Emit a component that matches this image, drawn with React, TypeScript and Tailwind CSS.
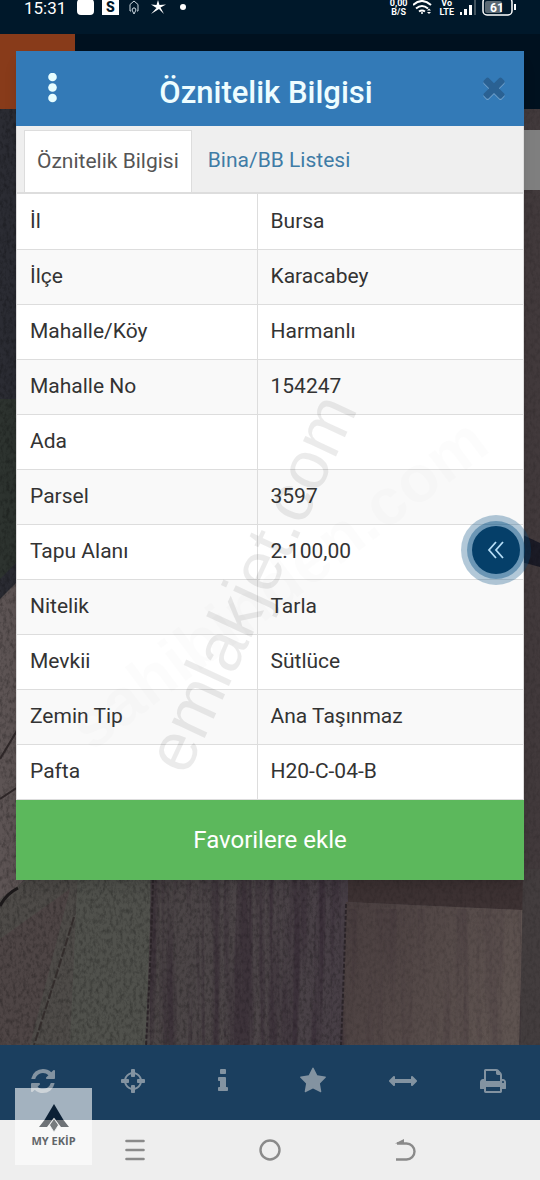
import { useState, type ReactNode } from "react";

interface AttributeRow {
  label: string;
  value: string;
}

const ROWS: AttributeRow[] = [
  { label: "İl", value: "Bursa" },
  { label: "İlçe", value: "Karacabey" },
  { label: "Mahalle/Köy", value: "Harmanlı" },
  { label: "Mahalle No", value: "154247" },
  { label: "Ada", value: "" },
  { label: "Parsel", value: "3597" },
  { label: "Tapu Alanı", value: "2.100,00" },
  { label: "Nitelik", value: "Tarla" },
  { label: "Mevkii", value: "Sütlüce" },
  { label: "Zemin Tip", value: "Ana Taşınmaz" },
  { label: "Pafta", value: "H20-C-04-B" },
];

// Toolbar glyphs, all on a 1792 unit square
const TOOLS = [
  {
    name: "Yenile",
    d: "M1639 1056q0 5-1 7-64 268-268 434.5t-478 166.5q-146 0-282.5-55t-243.5-157l-129 129q-19 19-45 19t-45-19-19-45v-448q0-26 19-45t45-19h448q26 0 45 19t19 45-19 45l-137 137q71 66 161 102t187 36q134 0 250-65t186-179q11-17 53-117 8-23 30-23h192q13 0 22.5 9.5t9.5 22.5zm25-800v448q0 26-19 45t-45 19h-448q-26 0-45-19t-19-45 19-45l138-138q-148-137-349-137-134 0-250 65t-186 179q-11 17-53 117-8 23-30 23h-199q-13 0-22.5-9.5t-9.5-22.5v-7q65-268 270-434.5t480-166.5q146 0 284 55.5t245 156.5l130-129q19-19 45-19t45 19 19 45z",
  },
  {
    name: "Konum",
    d: "M1325 1024h-109q-26 0-45-19t-19-45v-128q0-26 19-45t45-19h109q-32-108-112.5-188.5t-188.5-112.5v109q0 26-19 45t-45 19h-128q-26 0-45-19t-19-45v-109q-108 32-188.5 112.5t-112.5 188.5h109q26 0 45 19t19 45v128q0 26-19 45t-45 19h-109q32 108 112.5 188.5t188.5 112.5v-109q0-26 19-45t45-19h128q26 0 45 19t19 45v109q108-32 188.5-112.5t112.5-188.5zm339-192v128q0 26-19 45t-45 19h-143q-37 161-154.5 278.5t-278.5 154.5v143q0 26-19 45t-45 19h-128q-26 0-45-19t-19-45v-143q-161-37-278.5-154.5t-154.5-278.5h-143q-26 0-45-19t-19-45v-128q0-26 19-45t45-19h143q37-161 154.5-278.5t278.5-154.5v-143q0-26 19-45t45-19h128q26 0 45 19t19 45v143q161 37 278.5 154.5t154.5 278.5h143q26 0 45 19t19 45z",
  },
  {
    name: "Bilgi",
    d: "M1216 1344v128q0 26-19 45t-45 19h-512q-26 0-45-19t-19-45v-128q0-26 19-45t45-19h64v-384h-64q-26 0-45-19t-19-45v-128q0-26 19-45t45-19h384q26 0 45 19t19 45v576h64q26 0 45 19t19 45zm-128-1152v192q0 26-19 45t-45 19h-256q-26 0-45-19t-19-45v-192q0-26 19-45t45-19h256q26 0 45 19t19 45z",
  },
  {
    name: "Favoriler",
    d: "M1728 647q0 22-26 48l-363 354 86 500q1 7 1 20 0 21-10.5 35.5t-30.5 14.5q-19 0-40-12l-449-236-449 236q-22 12-40 12-21 0-31.5-14.5t-10.5-35.5q0-6 2-20l86-500-364-354q-25-27-25-48 0-37 56-46l502-73 225-455q19-41 49-41t49 41l225 455 502 73q56 9 56 46z",
  },
  {
    name: "Ölçüm",
    d: "M1792 896q0 26-19 45l-256 256q-19 19-45 19t-45-19-19-45v-128h-1024v128q0 26-19 45t-45 19-45-19l-256-256q-19-19-19-45t19-45l256-256q19-19 45-19t45 19 19 45v128h1024v-128q0-26 19-45t45-19 45 19l256 256q19 19 19 45z",
  },
  {
    name: "Yazdır",
    d: "M448 1536h896v-256h-896v256zm0-640h896v-384h-160q-40 0-68-28t-28-68v-160h-640v640zm1152 64q0-26-19-45t-45-19-45 19-19 45 19 45 45 19 45-19 19-45zm128 0v416q0 13-9.5 22.5t-22.5 9.5h-224v160q0 40-28 68t-68 28h-960q-40 0-68-28t-28-68v-160h-224q-13 0-22.5-9.5t-9.5-22.5v-416q0-79 56.5-135.5t135.5-56.5h64v-544q0-40 28-68t68-28h672q40 0 88 20t76 48l152 152q28 28 48 76t20 88v256h64q79 0 135.5 56.5t56.5 135.5z",
  },
];

const CLOSE_PATH =
  "M1490 1322q0 40-28 68l-136 136q-28 28-68 28t-68-28l-294-294-294 294q-28 28-68 28t-68-28l-136-136q-28-28-28-68t28-68l294-294-294-294q-28-28-28-68t28-68l136-136q28-28 68-28t68 28l294 294 294-294q28-28 68-28t68 28l136 136q28 28 28 68t-28 68l-294 294 294 294q28 28 28 68z";

function StatusBar() {
  return (
    <div className="flex h-[34px] items-start justify-between bg-[#00182a] px-6 text-white">
      <div className="flex h-4 items-center gap-2">
        <span className="text-[17px] leading-4">15:31</span>
        <svg className="h-4 w-[114px] shrink-0" viewBox="0 0 114 16" fill="none">
          <rect x="3" y="-1" width="17" height="16" rx="4" fill="#fff" />
          <rect x="28" y="-1" width="17" height="16" fill="#fff" />
          <text x="36.500" y="12" textAnchor="middle" fontSize="14" fontWeight="900" fill="#00182a">
            S
          </text>
          <path d="M57 11h-1V4.500L60 1l4 3.500V11h-1M60 14l-2-4 1-2h2l1 2z" stroke="#cdd8e0" />
          <path d="M77 4.500l5.500.5 1.500-5 1.500 5 6.500-.5-5.500 3 3.500 6.500-5-5-8 5 5.500-6z" fill="#fff" />
          <circle cx="109" cy="7" r="3" fill="#fff" />
        </svg>
      </div>
      <div className="flex h-4 items-center gap-[6px]">
        <span className="flex flex-col items-center text-[9px] leading-[9px] font-bold">
          <span>0,00</span>
          <span>B/S</span>
        </span>
        <svg className="h-4 w-5" viewBox="0 0 20 16" fill="none" stroke="#fff" strokeWidth="2">
          <path d="M0 5q9-8 18 0M3 8.500q6-5 12 0M6 11.500q3-2 6 0" />
          <circle cx="9" cy="13" r="1" fill="#fff" stroke="none" />
          <path d="M14 10.500l2-2 2 2zM14 12l2 2 2-2z" fill="#fff" stroke="none" />
        </svg>
        <span className="flex flex-col items-center text-[9px] leading-[9px] font-bold">
          <span>Vo</span>
          <span>LTE</span>
        </span>
        <svg className="h-4 w-4" viewBox="0 0 16 16">
          <path d="M0 12h2v3H0zM4 9h3v6H4zM9 5h3v10H9z" fill="#fff" />
          <path d="M14 0h2v15h-2z" fill="#43545f" />
        </svg>
        <svg className="h-4 w-[34px]" viewBox="0 0 34 16">
          <rect x="1" y="-2" width="29" height="17" rx="4" fill="none" stroke="#fff" strokeWidth="1.500" />
          <rect x="3" y="1" width="17" height="12" rx="2" fill="#5c6a74" />
          <path d="M32 4h2v6h-2z" fill="#fff" />
          <text x="15" y="11.500" textAnchor="middle" fontSize="12" fontWeight="700" fill="#fff">
            61
          </text>
        </svg>
      </div>
    </div>
  );
}

function SatelliteMap() {
  return (
    <svg className="absolute inset-0 h-full w-full" viewBox="0 0 540 936" preserveAspectRatio="xMidYMax slice">
      <defs>
        <filter id="soil" x="0" y="0" width="100%" height="100%">
          <feTurbulence type="fractalNoise" baseFrequency="0.3 0.2" numOctaves="4" seed="4" />
          <feColorMatrix values="0 0 0 0 0  0 0 0 0 0  0 0 0 0 0  2.4 0 0 0 -1" />
        </filter>
        <filter id="furrow" x="0" y="0" width="100%" height="100%">
          <feTurbulence type="fractalNoise" baseFrequency="0.1 0.004" numOctaves="4" seed="9" />
          <feColorMatrix values="0 0 0 0 0.02  0 0 0 0 0.01  0 0 0 0 0.02  4 0 0 0 -1.7" />
        </filter>
        <linearGradient id="purple-field" x1="0" x2="1">
          <stop offset="0" stopColor="#4b4546" />
          <stop offset="0.550" stopColor="#4c4548" />
          <stop offset="1" stopColor="#463d45" />
        </linearGradient>
        <linearGradient id="brown-field" x1="0" x2="1" y1="0" y2="0.300">
          <stop offset="0" stopColor="#483d3e" />
          <stop offset="1" stopColor="#5e5350" />
        </linearGradient>
      </defs>
      <rect width="540" height="936" fill="#473f42" />
      <path d="M0 0h30v460L0 500z" fill="#2b2c33" />
      <path d="M0 290h30v150L0 470z" fill="#2d332f" />
      <path d="M0 490l40-40v300L0 800z" fill="#5d5454" />
      <path d="M510 0h30v936h-30z" fill="#423a3c" />
      <path d="M510 420l30 14v24l-30-8z" fill="#1b1b26" />
      <path d="M0 790l40-30h110l-4 176H0z" fill="#4e4b48" />
      <path d="M0 830l70-50-40 156H0z" fill="#4e4545" />
      <path d="M78 760h74l-6 176H70z" fill="#50514c" />
      <path d="M152 760h202l-12 176H146z" fill="url(#purple-field)" />
      <path d="M348 760h192v42l-192-9z" fill="#3d3233" />
      <path d="M346 793l177 8-4 135H342z" fill="url(#brown-field)" />
      <path d="M523 760h17v176h-20z" fill="#433d3e" />
      <rect width="340" height="936" filter="url(#soil)" opacity="0.250" />
      <rect x="340" width="200" height="936" filter="url(#soil)" opacity="0.120" />
      <rect x="150" y="760" width="194" height="176" filter="url(#furrow)" opacity="0.400" />
      <rect x="344" y="800" width="177" height="136" filter="url(#furrow)" opacity="0.150" />
      <path d="M0 797q6-12 18-18" stroke="#1c191a" strokeWidth="3" fill="none" />
      <path d="M74 808q-18 60-40 128" stroke="#332d2c" strokeWidth="2" strokeDasharray="9 2" fill="none" />
      <path d="M153 770q-2 80-7 166M346 795q-2 70-5 141" stroke="#2b2428" strokeWidth="2" strokeDasharray="4 2" fill="none" />
      <path d="M0 690l18-12M0 650l18-30M524 80l16-6" stroke="#2e2728" strokeWidth="2" />
    </svg>
  );
}

function Tab({ active, onClick, children }: { active: boolean; onClick: () => void; children: ReactNode }) {
  return (
    <button
      type="button"
      role="tab"
      aria-selected={active}
      onClick={onClick}
      className={
        active
          ? "h-[62px] border border-b-0 border-[#dddddd] bg-white px-3 text-[21px] text-[#555555]"
          : "h-[62px] px-4 text-[21px] text-[#3f7ca6]"
      }
    >
      {children}
    </button>
  );
}

function AttributeTable() {
  return (
    <table className="w-full table-fixed border-collapse text-[21px] text-[#333333]">
      <tbody>
        {ROWS.map((row) => (
          <tr key={row.label} className="h-[55px] border-b border-[#dddddd] even:bg-[#f9f9f9]">
            <th scope="row" className="w-[240px] px-[13px] text-left font-normal">
              {row.label}
            </th>
            <td className="border-l border-[#dddddd] px-[13px]">{row.value}</td>
          </tr>
        ))}
      </tbody>
    </table>
  );
}

function AttributeDialog() {
  const [tab, setTab] = useState("attributes");

  return (
    <section role="dialog" aria-labelledby="dialog-title" className="relative w-full shadow-lg">
      <header className="flex h-[75px] items-center justify-between bg-[#337ab7] pr-1 pl-6 text-white">
        <button type="button" aria-label="Menü" className="flex h-12 w-6 items-center justify-center">
          <svg className="h-8 w-3" viewBox="0 0 12 32" fill="#e6fdff">
            <circle cx="6.500" cy="4" r="4.300" />
            <circle cx="6.500" cy="14.500" r="4.300" />
            <circle cx="6.500" cy="25" r="4.300" />
          </svg>
        </button>
        <h1 id="dialog-title" className="pt-2 text-[31px] leading-9 font-medium text-[#eefdff]">
          Öznitelik Bilgisi
        </h1>
        <button type="button" aria-label="Kapat" className="flex h-9 w-[52px] items-start justify-center">
          <svg className="h-8 w-8" viewBox="0 0 1792 1792">
            <path d={CLOSE_PATH} fill="#6f9fc9" transform="translate(0 70)" />
            <path d={CLOSE_PATH} fill="#2a6193" />
          </svg>
        </button>
      </header>
      <div className="border-x border-[#dddddd] bg-white">
        <div role="tablist" className="flex border-b-2 border-[#dddddd] bg-[#efefef] px-[7px] pt-1">
          <Tab active={tab === "attributes"} onClick={() => setTab("attributes")}>
            Öznitelik Bilgisi
          </Tab>
          <Tab active={tab === "buildings"} onClick={() => setTab("buildings")}>
            Bina/BB Listesi
          </Tab>
        </div>
        <AttributeTable />
      </div>
      <button type="button" className="h-20 w-full bg-[#5cb85c] text-2xl text-white">
        Favorilere ekle
      </button>
      <span className="pointer-events-none absolute top-[532px] left-[262px] -translate-x-1/2 -translate-y-1/2 -rotate-37 text-[66px] leading-none font-bold text-black/1 [font-family:'Liberation_Sans',sans-serif]">
        sahibinden.com
      </span>
      <span className="pointer-events-none absolute top-[532px] left-[235px] -translate-x-1/2 -translate-y-1/2 -rotate-65 text-[69px] leading-none text-black/8 [font-family:'Liberation_Sans',sans-serif]">
        emlakjet.com
      </span>
      <button
        type="button"
        aria-label="Paneli aç"
        className="absolute top-[464px] -right-[7px] flex h-[70px] w-[70px] items-center justify-center rounded-full bg-[#004a80]/30"
      >
        <span className="flex h-[58px] w-[58px] items-center justify-center rounded-full bg-[#004a80]/40">
          <span className="flex h-12 w-12 items-center justify-center rounded-full bg-[#053f69]">
            <svg className="h-5 w-5" viewBox="0 0 20 20" fill="none" stroke="#b5dcf5" strokeWidth="1.800">
              <path d="M10 2L3 10l7 8M17 2l-7 8 7 8" />
            </svg>
          </span>
        </span>
      </button>
    </section>
  );
}

function MapToolbar() {
  return (
    <div className="grid h-[75px] grid-cols-6 bg-[#1b3f5f]">
      {TOOLS.map((tool) => (
        <button key={tool.name} type="button" aria-label={tool.name} className="flex items-center justify-center pr-1 pb-1">
          <svg className="h-7 w-7" viewBox="0 0 1792 1792" fill="#8393a1">
            <path d={tool.d} />
          </svg>
        </button>
      ))}
    </div>
  );
}

function SystemNav() {
  return (
    <nav className="grid h-[60px] grid-cols-3 bg-[#eeeeee] px-[12.5%]">
      <button type="button" aria-label="Son uygulamalar" className="flex items-center justify-center">
        <svg className="h-6 w-6" viewBox="0 0 24 24" stroke="#8a8a8a" strokeWidth="2.600" strokeLinecap="round">
          <path d="M3.500 3h17M3.500 12h17M3.500 21h17" />
        </svg>
      </button>
      <button type="button" aria-label="Ana ekran" className="flex items-center justify-center">
        <svg className="h-6 w-6" viewBox="0 0 24 24" fill="none" stroke="#8a8a8a" strokeWidth="2.400">
          <circle cx="12" cy="12" r="9.500" />
        </svg>
      </button>
      <button type="button" aria-label="Geri" className="flex items-center justify-center">
        <svg className="h-6 w-6" viewBox="0 0 24 24" fill="none" stroke="#8a8a8a" strokeWidth="2.400">
          <path d="M3 21.500h10.500a8 8 0 0 0 0-16H4" />
          <path d="M2 5.500L11 1v4.500z" fill="#8a8a8a" stroke="none" />
        </svg>
      </button>
    </nav>
  );
}

function TeamBadge() {
  return (
    <div className="absolute bottom-[15px] left-[15px] flex h-[77px] w-[77px] flex-col items-center bg-white/60 pt-4">
      <svg className="h-7 w-8" viewBox="0 0 32 28">
        <path d="M6.500 16L1 23h8l7-9 7 9h8l-5.500-7L16 10z" fill="#6f7377" />
        <path d="M16 0L6.500 16H14l2-2.500 2 2.500h7.500z" fill="#0b2035" />
        <path d="M16 14.500l4.500 6.500-4.500 7-4.500-7z" fill="#777b7e" stroke="#f4f5f6" strokeWidth="0.800" />
      </svg>
      <span className="mt-[3px] text-[11px] leading-3 font-bold text-[#62666a] [font-family:'Open_Sans',sans-serif]">
        MY EKİP
      </span>
    </div>
  );
}

export default function App() {
  return (
    <div className="relative flex min-h-screen flex-col bg-[#00182a] [font-family:Roboto,sans-serif]">
      <StatusBar />
      <main className="grid flex-1">
        <div className="col-start-1 row-start-1 flex flex-col">
          <div className="h-[75px] bg-[#00111f]">
            <div className="h-full w-[75px] bg-[#883b1a]" />
          </div>
          <div className="relative flex flex-1 justify-end overflow-hidden pt-[21px]">
            <SatelliteMap />
            <div className="relative h-[60px] w-12 bg-[#7f7f7f]" />
          </div>
        </div>
        <div className="z-10 col-start-1 row-start-1 px-4 pt-[17px] pb-8">
          <AttributeDialog />
        </div>
      </main>
      <MapToolbar />
      <SystemNav />
      <TeamBadge />
    </div>
  );
}
